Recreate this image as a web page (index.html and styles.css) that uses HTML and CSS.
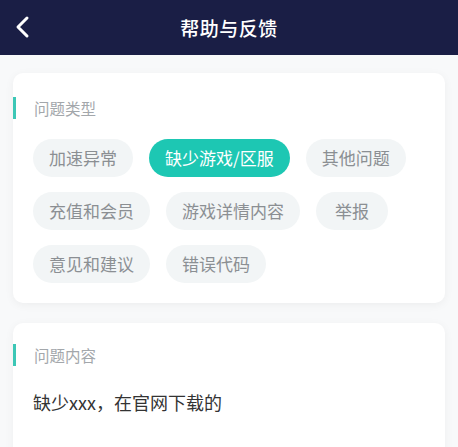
FILE: index.html
```html
<!DOCTYPE html>
<html lang="zh-CN">
<head>
    <meta charset="UTF-8">
    <meta name="viewport" content="width=device-width, initial-scale=1.0">
    <title>帮助与反馈</title>
    <link rel="stylesheet" href="styles.css">
</head>
<body>

<div class="header">
    <a class="back" href="#">
        <svg width="16" height="24" viewBox="0 0 16 24">
            <path d="M13 3 L4 12 L13 21" fill="none" stroke="#ffffff" stroke-width="3" stroke-linecap="round" stroke-linejoin="round"/>
        </svg>
    </a>
    <h1>帮助与反馈</h1>
</div>

<div class="content">
    <div class="card">
        <div class="card-title">问题类型</div>
        <div class="tags">
            <span class="tag">加速异常</span>
            <span class="tag active">缺少游戏/区服</span>
            <span class="tag">其他问题</span>
            <span class="tag">充值和会员</span>
            <span class="tag">游戏详情内容</span>
            <span class="tag tag-short">举报</span>
            <span class="tag">意见和建议</span>
            <span class="tag">错误代码</span>
        </div>
    </div>

    <div class="card card-content">
        <div class="card-title">问题内容</div>
        <div class="feedback-text">缺少xxx，在官网下载的</div>
    </div>
</div>

</body>
</html>
```

FILE: styles.css
```css
body {
    margin: 0;
    font-family: 'Noto Sans CJK SC', 'Noto Sans', sans-serif;
    background: #f8f9fa;
}

.header {
    height: 55px;
    background: #1a1e45;
    display: flex;
    align-items: center;
    justify-content: center;
    position: relative;
}

.header h1 {
    margin: 0;
    font-size: 19px;
    font-weight: 500;
    color: #ffffff;
    letter-spacing: 0.5px;
}

.back {
    position: absolute;
    left: 14px;
    top: 15px;
    display: flex;
}

.content {
    padding: 18px 13px 0 13px;
    display: flex;
    flex-direction: column;
    gap: 20px;
}

.card {
    background: #ffffff;
    border-radius: 10px;
    box-shadow: 0 2px 10px rgba(0, 0, 0, 0.05);
    padding: 23px 20px 20px 20px;
}

.card-content {
    padding-top: 20px;
}

.card-title {
    position: relative;
    font-size: 15.5px;
    line-height: 24px;
    color: #a3a7ab;
    margin-left: 1px;
}

.card-title::before {
    content: "";
    position: absolute;
    left: -21px;
    top: 1px;
    width: 3px;
    height: 22px;
    background: #3cc7b6;
}

.tags {
    margin-top: 19px;
    display: flex;
    flex-wrap: wrap;
    gap: 15px 16px;
}

.tag {
    height: 38px;
    line-height: 38px;
    text-align: center;
    padding: 0 16px;
    border-radius: 19px;
    background: #f2f5f6;
    color: #8b8f93;
    font-size: 17px;
}

.tag-short {
    padding: 0 19px;
}

.tag.active {
    background: #1dc7b3;
    color: #ffffff;
}

.feedback-text {
    margin-top: 22px;
    font-size: 18px;
    color: #333333;
    padding-bottom: 40px;
}
```
